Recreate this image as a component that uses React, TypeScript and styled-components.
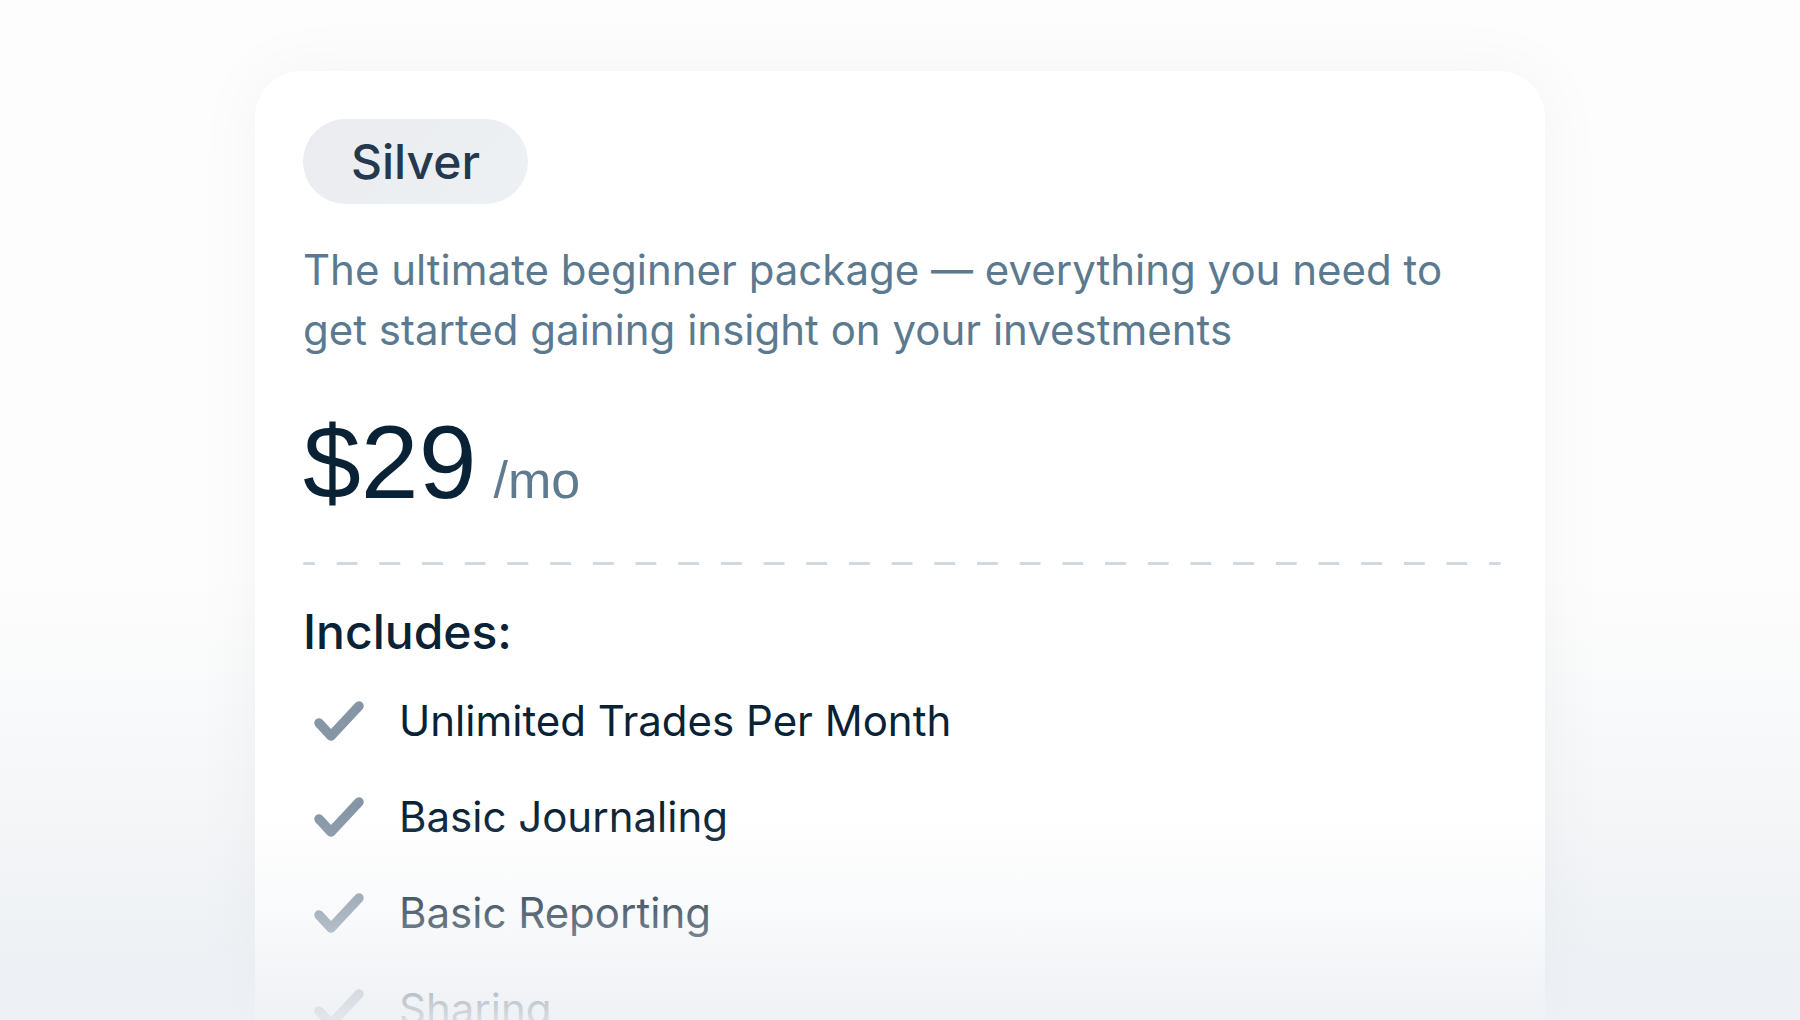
import React from "react";
import styled, { createGlobalStyle } from "styled-components";

const Global = createGlobalStyle`
  html, body { margin: 0; padding: 0; background: #fdfdfd; }
  body { font-family: Inter, "Noto Sans", sans-serif; overflow: hidden; }
  * { box-sizing: border-box; }
`;

const Page = styled.div`
  position: relative;
  width: 1800px;
  height: 1020px;
  overflow: hidden;
  background: linear-gradient(to bottom, #fdfdfd 0px, #fdfdfd 580px, #f4f6f8 820px, #edf0f4 1020px);
  display: flex;
  justify-content: center;
  padding-top: 71px;
`;

const Card = styled.section`
  width: 1290px;
  height: 1100px;
  background: #ffffff;
  border-radius: 46px;
  box-shadow: 0 0 70px rgba(20, 30, 45, 0.045);
  padding: 48px 48px 0 48px;
  display: flex;
  flex-direction: column;
  align-items: flex-start;
`;

const Badge = styled.div`
  height: 85px;
  padding: 0 48px;
  border-radius: 999px;
  background: linear-gradient(135deg, #eaecf0, #eef1f4);
  color: #24394e;
  font-size: 48px;
  font-weight: 500;
  display: flex;
  align-items: center;
`;

const Description = styled.p`
  margin: 36px 0 0 0;
  color: #5b7a90;
  font-size: 42px;
  line-height: 60px;
  font-weight: 400;
  max-width: 1195px;
`;

const PriceRow = styled.div`
  margin-top: 50px;
  display: flex;
  align-items: baseline;
  gap: 17px;
  font-family: "Liberation Sans", Arial, sans-serif;
`;

const Amount = styled.span`
  color: #0a2236;
  font-size: 104px;
  line-height: 1;
  font-weight: 400;
`;

const Period = styled.span`
  color: #5f7b90;
  font-size: 52px;
  line-height: 1;
  font-weight: 400;
`;

const Divider = styled.div`
  margin-top: 48px;
  width: 1198px;
  height: 3px;
  border-radius: 2px;
  background-image: linear-gradient(to right, #d1d8df 0 21px, transparent 21px 42.7px);
  background-size: 42.7px 3px;
  background-position: -9px 0;
  background-repeat: repeat-x;
`;

const Heading = styled.h3`
  margin: 38px 0 0 0;
  color: #0a2236;
  font-size: 48px;
  line-height: 58px;
  font-weight: 500;
`;

const FeatureList = styled.ul`
  list-style: none;
  margin: 31px 0 0 0;
  padding: 0;
  display: flex;
  flex-direction: column;
  gap: 38px;
`;

const Feature = styled.li`
  display: flex;
  align-items: center;
  gap: 34px;
  color: #0a2236;
  font-size: 42px;
  line-height: 58px;
  font-weight: 400;
  padding-left: 10px;
`;

const CheckIcon = styled.svg`
  width: 52px;
  height: 42px;
  flex: none;
`;

const Fade = styled.div`
  position: absolute;
  left: 0;
  right: 0;
  bottom: 0;
  height: 210px;
  pointer-events: none;
  background: linear-gradient(
    to bottom,
    rgba(237, 240, 244, 0) 0%,
    rgba(237, 240, 244, 0.3) 45%,
    rgba(237, 240, 244, 0.78) 88%,
    rgba(237, 240, 244, 0.9) 100%
  );
`;

const features = [
  "Unlimited Trades Per Month",
  "Basic Journaling",
  "Basic Reporting",
  "Sharing",
];

const Check = () => (
  <CheckIcon viewBox="0 0 52 42" fill="none">
    <path
      d="M6 23 L18 36 L46 6"
      stroke="#8796a6"
      strokeWidth="9.5"
      strokeLinecap="round"
      strokeLinejoin="round"
    />
  </CheckIcon>
);

export default function App() {
  return (
    <>
      <Global />
      <Page>
        <Card>
          <Badge>Silver</Badge>
          <Description>
            The ultimate beginner package — everything you need to get started
            gaining insight on your investments
          </Description>
          <PriceRow>
            <Amount>$29</Amount>
            <Period>/mo</Period>
          </PriceRow>
          <Divider />
          <Heading>Includes:</Heading>
          <FeatureList>
            {features.map((f) => (
              <Feature key={f}>
                <Check />
                <span>{f}</span>
              </Feature>
            ))}
          </FeatureList>
        </Card>
        <Fade />
      </Page>
    </>
  );
}
